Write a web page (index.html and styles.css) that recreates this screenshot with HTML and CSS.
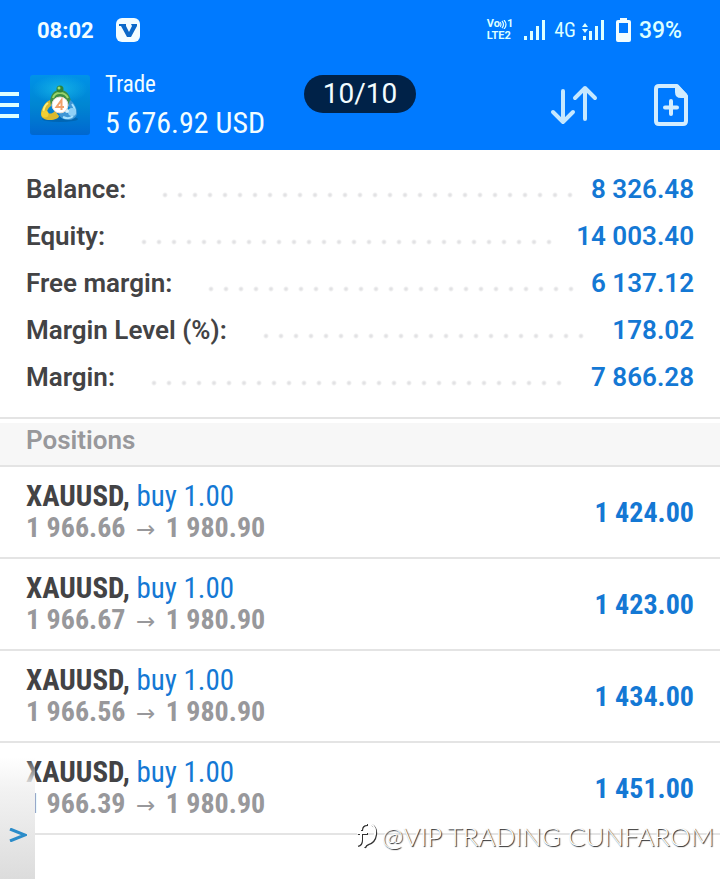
FILE: index.html
```html
<!DOCTYPE html>
<html lang="en">
<head>
<meta charset="utf-8">
<meta name="viewport" content="width=device-width, initial-scale=1">
<title>Trade</title>
<link rel="stylesheet" href="styles.css">
</head>
<body>
<header class="top">
  <div class="status">
    <time class="clock">08:02</time>
    <svg class="badge-v" viewBox="0 0 24 24" width="24" height="24" aria-hidden="true"><rect width="24" height="24" rx="6" fill="#f2fdff"/><path d="M3 6h7v2l3 6 3-6-1-2h6v2l-6 11h-4L5 8H3z" fill="#0b69c8"/></svg>
    <div class="signals">
      <span class="volte"><span class="volte-line">Vo<svg viewBox="0 0 7 9" width="7" height="9" aria-hidden="true"><path d="M0 2q2 2.500 0 5M2 1q3 3.500 0 7M4 0q4 4.500 0 9" fill="none" stroke="#dcffff" stroke-width="1.200"/></svg>1</span><span class="volte-line">LTE2</span></span>
      <svg class="bars" viewBox="0 0 22 20" width="22" height="20" fill="#dcffff" aria-hidden="true"><path d="M0 16h3v4H0zM6 11h3v9H6zM12 6h3v14h-3zM18 0h3v20h-3z"/></svg>
      <span class="net">4G</span>
      <svg class="bars2" viewBox="0 0 23 20" width="23" height="20" fill="#dcffff" aria-hidden="true"><path d="M0 7l3-4 3 4zM0 9h6l-3 4zM1 16h3v4H1zM7 11h3v9H7zM13 6h3v14h-3zM19 0h3v20h-3z"/></svg>
      <svg class="battery" viewBox="0 0 15 24" width="15" height="24" aria-hidden="true"><path fill="#f2fdff" fill-rule="evenodd" d="M4 0h7v2h2q2 0 2 2v18q0 2-2 2H2q-2 0-2-2V4q0-2 2-2h2zM3 5v10h9V5z"/></svg>
      <span class="percent">39%</span>
    </div>
  </div>
  <div class="bar">
    <button class="icon-btn menu" aria-label="Menu"><svg viewBox="0 0 19 28" width="19" height="28"><path d="M0 3h19M0 14h19M0 25h19" stroke="#dcffff" stroke-width="4"/></svg></button>
    <svg class="logo" viewBox="0 0 60 60" width="60" height="60" aria-hidden="true">
      <defs>
        <linearGradient id="sky" x1="0" y1="0" x2="0" y2="1"><stop offset="0" stop-color="#0092e8"/><stop offset=".5" stop-color="#0086d2"/><stop offset="1" stop-color="#0067d0"/></linearGradient>
        <radialGradient id="glow"><stop offset="0" stop-color="#1cc0e8"/><stop offset="1" stop-color="#1cc0e8" stop-opacity="0"/></radialGradient>
      </defs>
      <rect width="60" height="60" rx="3" fill="url(#sky)"/>
      <ellipse cx="30" cy="14" rx="28" ry="14" fill="url(#glow)" opacity=".7"/>
      <ellipse cx="30" cy="44" rx="18" ry="3" fill="#005696" opacity=".5"/>
      <path d="M20 29c0-8 3-14 10-14s11 6 11 14l-5 2c0-5-1-9-6-9s-5 4-5 9z" fill="#3d8f45"/>
      <path d="M23 23c1-4 4-5 7-5s6 1 8 5" fill="none" stroke="#9bd46c" stroke-width="2"/>
      <path d="M20 25c-5 2-9 9-9 14 0 4 4 6 9 6s9-2 9-4l-4-5c-3 3-5 3-7 2s0-5 3-7z" fill="#d9b92d"/>
      <path d="M18 28c-3 2-5 6-4 9" fill="none" stroke="#ffee7a" stroke-width="2"/>
      <path d="M40 25c5 3 7 9 7 13s-4 7-8 7-9-2-10-5l5-4c3 3 6 3 7 1s0-4-3-6z" fill="#3f97d6"/>
      <path d="M42 29c3 4 4 8 2 11M33 42c4 2 8 1 10-1" fill="none" stroke="#a5e1ff" stroke-width="2"/>
      <circle cx="30" cy="14" r="3.500" fill="#2e843e"/><circle cx="29" cy="13" r="1.500" fill="#9fe06f"/>
      <circle cx="15" cy="39" r="3.500" fill="#f0cf36"/><circle cx="42" cy="37" r="4" fill="#8fd0f6"/><circle cx="37" cy="36" r="2" fill="#d3f1ff"/>
      <circle cx="30" cy="30" r="8" fill="#fff" stroke="#e8dcd0"/>
      <path d="M31.500 35v-10l-5 7h7.500" fill="none" stroke="#f2a06a" stroke-width="2"/>
    </svg>
    <div class="account"><h1 class="title">Trade</h1><p class="total">5 676.92 USD</p></div>
    <button class="icon-btn sort" aria-label="Sort"><svg viewBox="0 0 48 42" width="48" height="42"><path d="M13 7v31M3 28L13 38 23 28M35 35V4M25 14L35 4 45 14" fill="none" stroke="#c5e8ff" stroke-width="4" stroke-linecap="round" stroke-linejoin="round"/></svg></button>
    <button class="icon-btn new" aria-label="New order"><svg viewBox="0 0 34 42" width="34" height="42"><path d="M5 2h18l9 10v25q0 3-3 3H5q-3 0-3-3V5q0-3 3-3z" fill="none" stroke="#d3edff" stroke-width="4" stroke-linejoin="round"/><path d="M21 1h3l9 9v4h-6q-6 0-6-6z" fill="#d3edff"/><path d="M17 17v13M11 23.500h12" stroke="#d3edff" stroke-width="4" stroke-linecap="round"/></svg></button>
  </div>
  <span class="counter">10/10</span>
</header>
<main>
  <dl class="summary">
    <div class="line"><dt>Balance:<span class="leader"></span></dt><dd>8 326.48</dd></div>
    <div class="line"><dt>Equity:<span class="leader"></span></dt><dd>14 003.40</dd></div>
    <div class="line"><dt>Free margin:<span class="leader"></span></dt><dd>6 137.12</dd></div>
    <div class="line"><dt>Margin Level (%):<span class="leader"></span></dt><dd>178.02</dd></div>
    <div class="line"><dt>Margin:<span class="leader"></span></dt><dd>7 866.28</dd></div>
  </dl>
  <h2 class="section">Positions</h2>
  <ul class="positions">
    <li class="position"><div><p class="deal"><b>XAUUSD,</b> <span class="side">buy 1.00</span></p><p class="prices">1 966.66 <span class="arrow">→</span> 1 980.90</p></div><span class="profit">1 424.00</span></li>
    <li class="position"><div><p class="deal"><b>XAUUSD,</b> <span class="side">buy 1.00</span></p><p class="prices">1 966.67 <span class="arrow">→</span> 1 980.90</p></div><span class="profit">1 423.00</span></li>
    <li class="position"><div><p class="deal"><b>XAUUSD,</b> <span class="side">buy 1.00</span></p><p class="prices">1 966.56 <span class="arrow">→</span> 1 980.90</p></div><span class="profit">1 434.00</span></li>
    <li class="position"><div><p class="deal"><b>XAUUSD,</b> <span class="side">buy 1.00</span></p><p class="prices">1 966.39 <span class="arrow">→</span> 1 980.90</p></div><span class="profit">1 451.00</span></li>
  </ul>
</main>
<button class="drawer" aria-label="Open panel"><svg viewBox="0 0 18 14" width="18" height="14"><path d="M1 1l15 6-15 6" fill="none" stroke="#2b8cc9" stroke-width="3"/></svg></button>
<div class="watermark"><svg viewBox="0 0 22 26" width="22" height="26" aria-hidden="true"><g fill="none" stroke-width="2"><path d="M12 2q-6 0-6 6M2 11h10M6 9v9q0 4-4 5M16 2q5 3 4 10t-7 9q-3 1-4 4" stroke="#333"/><path d="M11 1q-6 0-6 6M1 10h10M5 8v9q0 4-4 5M15 1q5 3 4 10t-7 9q-3 1-4 4" stroke="#fff"/></g></svg><span>@VIP TRADING CUNFAROM</span></div>
</body>
</html>
```
FILE: styles.css
```css
* { box-sizing: border-box; }
body {
  margin: 0;
  min-height: 100vh;
  position: relative;
  background: #fff;
  color: #434345;
  font-family: Roboto, "Liberation Sans", sans-serif;
}
h1, h2, p, dl, dd, ul { margin: 0; padding: 0; }
button { border: 0; padding: 0; background: none; }
svg { display: block; flex: none; }

.top { position: relative; height: 150px; background: #007aff; color: #f2fdff; }
.status { display: flex; align-items: center; height: 60px; padding: 0 38px 0 37px; }
.clock { font-size: 22px; font-weight: 700; margin-right: 22px; }
.signals { display: flex; align-items: center; margin-left: auto; color: #dcffff; }
.volte { display: flex; flex-direction: column; font-size: 11px; line-height: 12px; font-weight: 700; margin-right: 11px; }
.volte-line { display: flex; align-items: center; }
.bars { margin-right: 8px; }
.net { font-family: "Roboto Condensed", Roboto, sans-serif; font-size: 20px; margin-right: 6px; }
.bars2 { margin-right: 11px; }
.battery { margin-right: 8px; }
.percent { font-size: 23px; font-weight: 500; }

.bar { display: flex; align-items: center; height: 90px; padding-right: 32px; }
.menu { margin-right: 11px; }
.logo { margin-right: 15px; }
.account {
  flex: 1;
  padding-top: 4px;
  font-family: "Roboto Condensed", "Liberation Sans Narrow", Roboto, sans-serif;
}
.title { font-size: 23px; line-height: 32px; font-weight: 400; }
.total { font-size: 30px; line-height: 44px; }
.sort { margin-right: 56px; }
.counter {
  position: absolute;
  top: 75px;
  left: 50%;
  transform: translateX(-50%);
  width: 112px;
  border-radius: 19px;
  background: #002248;
  font-size: 28px;
  line-height: 38px;
  text-align: center;
}

.summary { padding: 16px 26px; border-bottom: 2px solid #e4e4e4; font-size: 26px; line-height: 47px; font-weight: 600; }
.line { display: flex; align-items: center; }
.line dt { display: flex; flex: 1; align-items: center; }
.leader { flex: 1; margin: 10px 7px 0 36px; }
.leader::before {
  content: "";
  display: block;
  width: round(down, 100%, 15px);
  height: 6px;
  background: radial-gradient(circle at 3px 3px, #e2e2e4 1px, transparent 3px) 0 0 / 15px 6px repeat-x;
}
.line dd { color: #1478d4; }
.section {
  height: 44px;
  margin-top: 4px;
  padding-left: 26px;
  background: #f7f7f7;
  border-bottom: 2px solid #e4e4e4;
  color: #98989b;
  font-size: 26px;
  line-height: 34px;
  font-weight: 600;
}

.positions { list-style: none; font-family: "Roboto Condensed", "Liberation Sans Narrow", Roboto, sans-serif; font-size: 28px; }
.position { display: flex; align-items: center; justify-content: space-between; height: 92px; padding: 0 26px; border-bottom: 2px solid #e4e4e4; }
.deal, .prices { line-height: 32px; }
.deal { font-size: 29px; }
.side, .profit { color: #1478d4; }
.prices { color: #98989b; font-weight: 700; }
.profit { font-weight: 700; }
.arrow { margin: 0 4px; font-family: "DejaVu Sans", sans-serif; font-size: 23px; font-weight: 400; line-height: 20px; }

.drawer {
  position: absolute;
  left: 0;
  bottom: 0;
  width: 35px;
  height: 122px;
  padding: 34px 0 0 9px;
  background: linear-gradient(#ffffff00, #f3f3f3 25%, #dcdcdc);
}
.watermark {
  position: absolute;
  right: 6px;
  bottom: 26px;
  display: flex;
  align-items: center;
  gap: 4px;
  color: #fff;
  font-family: Lato, sans-serif;
  font-size: 26px;
  font-weight: 300;
  line-height: 34px;
  text-shadow: 1px 1px 1px #222;
}
```
